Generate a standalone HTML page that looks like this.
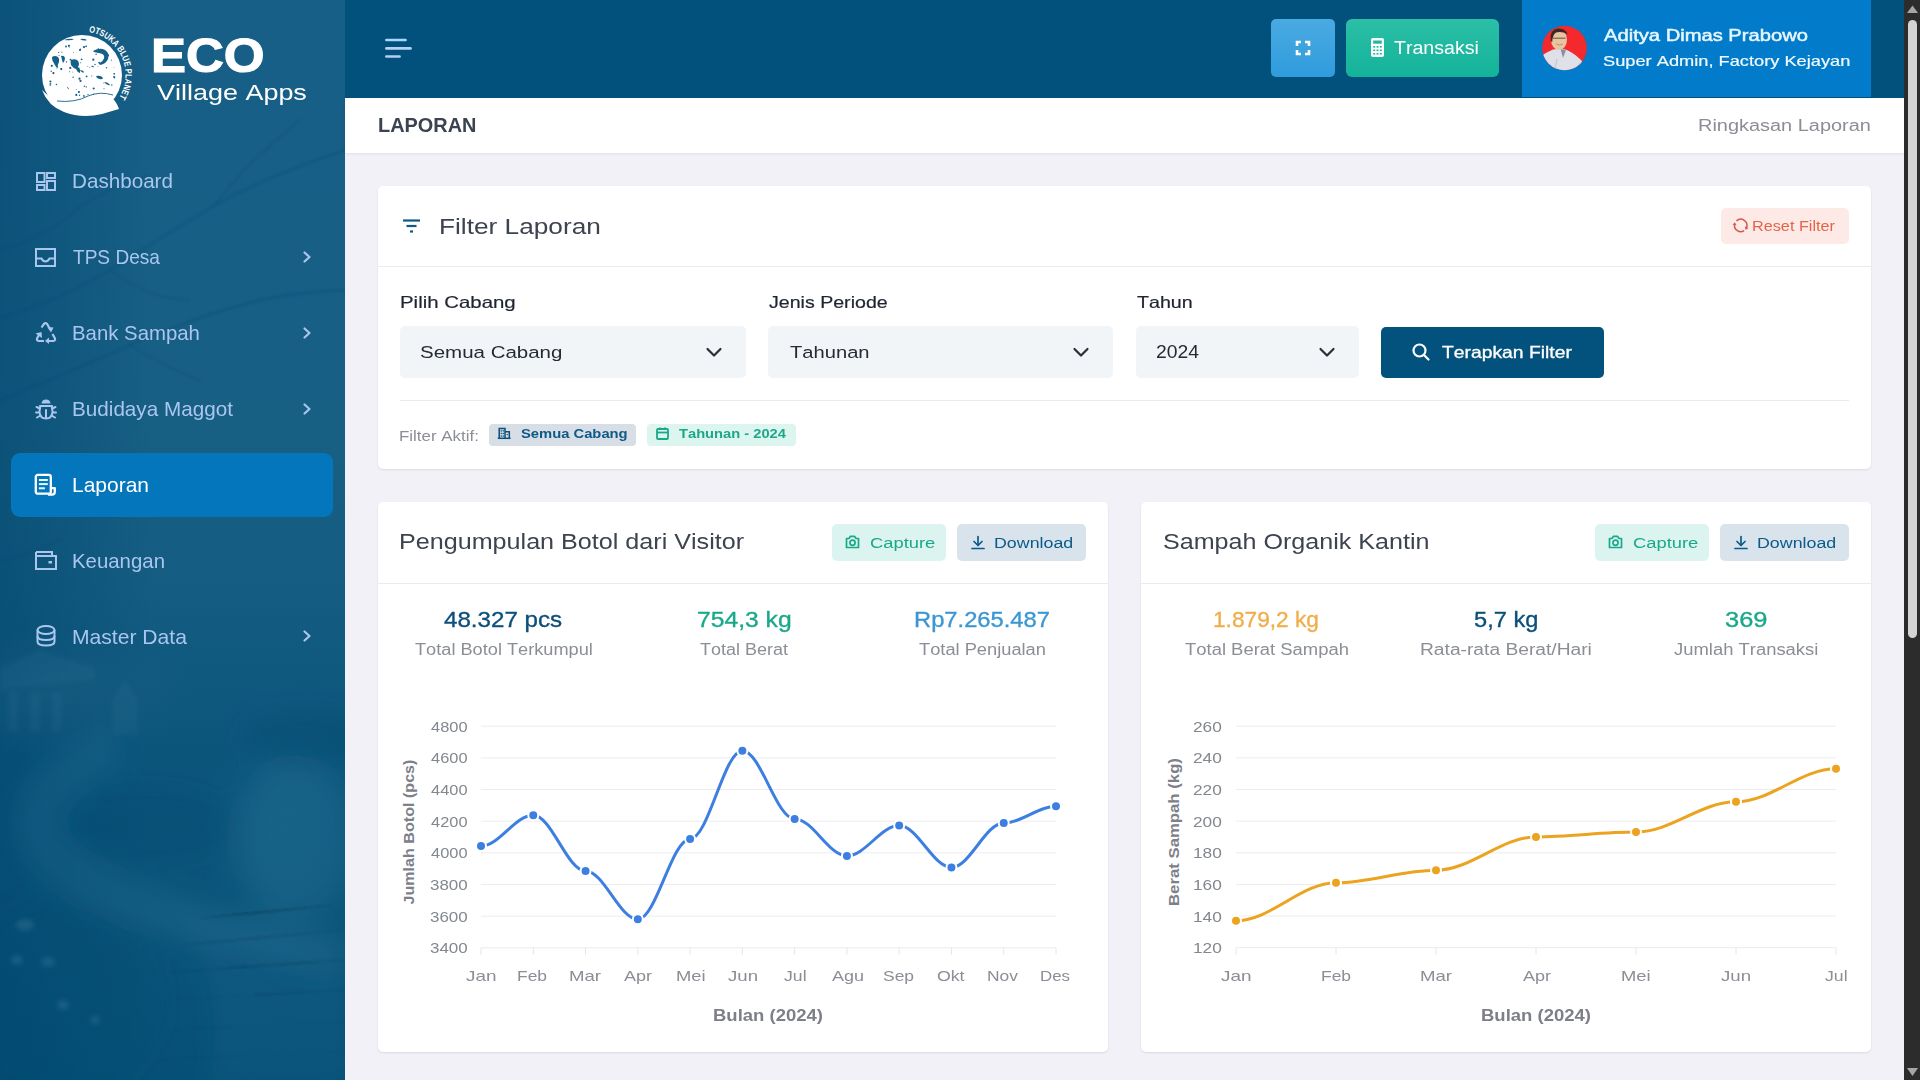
<!DOCTYPE html><html><head><meta charset="utf-8"><style>
*{margin:0;padding:0;box-sizing:border-box}
html,body{width:1920px;height:1080px;overflow:hidden;font-family:"Liberation Sans",sans-serif;background:#f2f1f7}
.abs{position:absolute}
.t{position:absolute;white-space:nowrap;line-height:1;transform-origin:0 0;font-kerning:none}
svg{overflow:visible}
</style></head><body>
<div class="abs" style="left:0px;top:0px;width:345px;height:1080px;background:linear-gradient(180deg,#175f87 0%,#185f84 40%,#145c81 55%,#0b557b 70%,#0a5479 85%,#065077 100%);"></div>
<div class="abs" style="left:0px;top:0px;width:345px;height:1080px;background:linear-gradient(90deg,rgba(0,70,110,.5) 0%,rgba(0,70,110,0) 45%);"></div>
<div class="abs" style="left:0px;top:630px;width:200px;height:130px;background:radial-gradient(ellipse at 25% 50%,rgba(60,120,150,.18),rgba(60,120,150,0) 70%);"></div>
<div class="abs" style="left:200px;top:680px;width:145px;height:300px;background:radial-gradient(ellipse at 60% 50%,rgba(50,125,165,.15),rgba(50,125,165,0) 70%);"></div>
<svg class="abs" style="left:0;top:0;overflow:hidden" width="345" height="1080" viewBox="0 0 345 1080">
<defs><filter id="b1" x="-20%" y="-20%" width="140%" height="140%"><feGaussianBlur stdDeviation="1"/></filter>
<filter id="b6" x="-50%" y="-50%" width="200%" height="200%"><feGaussianBlur stdDeviation="8"/></filter>
<filter id="b2" x="-50%" y="-50%" width="200%" height="200%"><feGaussianBlur stdDeviation="2"/></filter></defs>
<g fill="none" stroke="#0a4a72" stroke-opacity=".28" stroke-linecap="round" filter="url(#b1)">
<path d="M0 318 Q60 300 110 270 Q170 232 215 205 Q270 175 345 150" stroke-width="3"/>
<path d="M0 400 Q70 372 130 345 Q200 315 260 300 Q300 292 345 290" stroke-width="3.5"/>
<path d="M110 270 Q150 300 190 300" stroke-width="2"/>
<path d="M215 205 Q240 170 300 120" stroke-width="2"/>
<path d="M0 250 Q40 240 70 215 Q100 190 150 175" stroke-width="2"/>
<path d="M130 345 Q170 370 200 380" stroke-width="2"/>
<path d="M0 560 Q30 555 60 540" stroke-width="2.5"/>
</g>

<g fill="#5b8fb0" fill-opacity=".09" filter="url(#b2)">
<path d="M0 668 L40 650 L95 668 L95 680 L0 690z"/>
<rect x="8" y="692" width="10" height="40"/><rect x="30" y="692" width="10" height="40"/><rect x="52" y="692" width="10" height="40"/>
<path d="M112 700 L125 680 L138 700 L138 735 L112 735z"/>
</g>
<defs><filter id="b12" x="-50%" y="-50%" width="200%" height="200%"><feGaussianBlur stdDeviation="12"/></filter></defs>
<g filter="url(#b12)">
<ellipse cx="295" cy="840" rx="60" ry="80" fill="#4a90b4" fill-opacity=".14"/>
<ellipse cx="305" cy="738" rx="65" ry="28" fill="#03456b" fill-opacity=".32"/>
<path d="M115 745 Q0 800 55 860 Q120 915 345 955" fill="none" stroke="#4a90b4" stroke-opacity=".13" stroke-width="42"/>
<ellipse cx="150" cy="825" rx="85" ry="38" fill="#03456b" fill-opacity=".22"/>
<ellipse cx="60" cy="1000" rx="105" ry="100" fill="#03456b" fill-opacity=".18"/>
<path d="M165 905 Q260 930 345 945 L345 1080 L210 1080 Q230 980 165 905z" fill="#2f7aa3" fill-opacity=".12"/>
</g>
<g stroke="#0a4a72" stroke-opacity=".20" stroke-width="1.4" filter="url(#b1)">
<path d="M200 918 Q270 912 335 905"/><path d="M180 945 Q260 938 345 930"/><path d="M170 972 Q250 966 345 960"/><path d="M165 1000 Q250 995 345 990"/><path d="M160 1030 Q250 1026 345 1022"/><path d="M155 1060 Q250 1056 345 1052"/>
</g>
<g fill="#7fb0cc" fill-opacity=".16" filter="url(#b2)"><ellipse cx="25" cy="925" rx="9" ry="6"/><ellipse cx="17" cy="960" rx="6" ry="5"/><ellipse cx="48" cy="962" rx="7" ry="5"/><ellipse cx="63" cy="1005" rx="6" ry="5"/><ellipse cx="95" cy="1020" rx="5" ry="4"/></g>
</svg>
<svg class="abs" style="left:30px;top:20px" width="110" height="110" viewBox="0 0 110 110">
<defs><path id="arc" d="M58.8 12.04 A43.5 43.5 0 0 1 88.9 78.05"/></defs>
<circle cx="52" cy="55" r="40" fill="#fff"/>
<path d="M12 70 Q18 86 34 92 Q52 99 72 94 Q82 91 89 89 Q86 80 78 74 Q66 70 54 75 Q40 80 28 80 Q20 78 12 70 Z" fill="#fff"/>
<path d="M27 81 Q45 83 58 76 Q70 71 83 75" fill="none" stroke="#15608a" stroke-width="0.9"/>
<g fill="#15608a"><path d="M22 37 q3 -2 6 0 q2 2 1 5 q-2 3 -1 6 q-3 -1 -3 -4 q-3 -2 -3 -7z"/>
<path d="M31 36 q3 -1 4 2 q0 3 -2 5 q-1 -3 -2 -7z"/>
<path d="M41 40 q4 -2 7 1 q2 3 0 6 q3 2 2 6 q-3 -1 -4 -4 q-3 -1 -5 -4 q-1 -3 0 -5z"/>
<path d="M50 50 q3 0 4 2 q-1 2 -4 -2z"/>
<path d="M63 31 q7 -4 12 -1 q5 3 3 9 q-2 5 -8 6 l-1 -1.5 q4 -2 5 -5 q1 -4 -3 -5 q-4 -1 -7 -1.5z" />
<path d="M61 46 q2 -1 3 1 q-1 1 -3 -1z"/>
<path d="M66 56 q5 -1 7 2 q-1 2 -3 1 q-3 0 -4 -3z"/>
<path d="M34 20 q5 -2 10 -1 q-2 2 -10 1z"/>
<path d="M50 19 q4 -1 7 1 q-3 1.5 -7 -1z"/>
<path d="M74 62 q4 0 6 3 q-3 1 -6 -3z"/><circle cx="39.3" cy="27.4" r="0.45"/><circle cx="21.2" cy="51.2" r="0.7"/><circle cx="58.0" cy="74.4" r="0.55"/><circle cx="46.6" cy="69.3" r="0.45"/><circle cx="84.2" cy="57.1" r="1.1"/><circle cx="84.2" cy="53.8" r="0.9"/><circle cx="56.1" cy="26.3" r="0.9"/><circle cx="38.2" cy="68.6" r="0.55"/><circle cx="23.4" cy="53.4" r="0.55"/><circle cx="42.8" cy="52.0" r="0.45"/><circle cx="56.6" cy="56.4" r="0.9"/><circle cx="65.0" cy="44.5" r="0.7"/><circle cx="49.5" cy="75.3" r="0.7"/><circle cx="37.6" cy="67.3" r="0.55"/><circle cx="51.6" cy="39.3" r="0.9"/><circle cx="24.5" cy="43.9" r="0.7"/><circle cx="26.9" cy="48.3" r="0.45"/><circle cx="56.2" cy="66.9" r="0.7"/><circle cx="40.5" cy="39.7" r="0.9"/><circle cx="57.8" cy="46.3" r="0.45"/><circle cx="84.0" cy="47.4" r="0.45"/><circle cx="20.4" cy="61.5" r="1.1"/><circle cx="36.5" cy="41.9" r="0.7"/><circle cx="20.2" cy="65.6" r="0.55"/><circle cx="69.2" cy="42.7" r="0.9"/><circle cx="21.8" cy="45.8" r="1.1"/><circle cx="36.0" cy="26.5" r="0.9"/><circle cx="78.2" cy="35.3" r="0.9"/><circle cx="43.4" cy="32.3" r="0.45"/><circle cx="28.7" cy="32.4" r="0.55"/><circle cx="29.1" cy="35.5" r="0.55"/><circle cx="46.2" cy="40.9" r="1.1"/><circle cx="38.9" cy="25.8" r="1.1"/><circle cx="84.4" cy="58.6" r="0.45"/><circle cx="48.9" cy="72.0" r="1.1"/><circle cx="44.3" cy="42.7" r="0.45"/><circle cx="50.7" cy="42.8" r="0.55"/><circle cx="27.7" cy="39.1" r="0.45"/><circle cx="23.4" cy="53.1" r="1.1"/><circle cx="23.3" cy="40.5" r="0.45"/><circle cx="43.1" cy="57.3" r="0.7"/><circle cx="59.4" cy="47.4" r="0.45"/><circle cx="49.6" cy="48.0" r="0.45"/><circle cx="26.4" cy="64.5" r="0.7"/><circle cx="50.5" cy="60.9" r="1.1"/><circle cx="54.0" cy="27.1" r="1.1"/><circle cx="81.8" cy="65.0" r="0.7"/><circle cx="66.1" cy="34.2" r="0.7"/><circle cx="81.4" cy="40.1" r="0.55"/><circle cx="54.3" cy="66.3" r="0.7"/><circle cx="61.8" cy="56.0" r="0.55"/><circle cx="74.0" cy="68.7" r="0.55"/><circle cx="30.4" cy="48.6" r="0.45"/><circle cx="50.0" cy="30.0" r="1.1"/><circle cx="31.9" cy="32.1" r="0.55"/><circle cx="40.3" cy="47.9" r="1.1"/><circle cx="76.5" cy="47.7" r="0.7"/><circle cx="63.6" cy="74.4" r="0.55"/><circle cx="50.4" cy="29.1" r="0.7"/><circle cx="68.0" cy="46.7" r="0.45"/><circle cx="68.2" cy="28.5" r="0.55"/><circle cx="49.5" cy="58.7" r="1.1"/><circle cx="63.3" cy="39.7" r="1.1"/><circle cx="73.6" cy="63.0" r="0.45"/><circle cx="53.9" cy="75.9" r="0.9"/><circle cx="31.3" cy="49.1" r="1.1"/><circle cx="39.5" cy="51.7" r="0.55"/><circle cx="20.4" cy="63.9" r="0.9"/><circle cx="63.7" cy="68.5" r="1.1"/><circle cx="46.3" cy="74.9" r="1.1"/></g>
<text font-family="Liberation Sans" font-weight="700" font-size="9.2" fill="#fff"><textPath href="#arc" textLength="85" lengthAdjust="spacingAndGlyphs">OTSUKA BLUE PLANET</textPath></text>
</svg>
<div class="t" style="left:151.41px;top:31.00px;font-size:48.26px;color:#fff;font-weight:700;transform:scaleX(1.0867);-webkit-text-stroke:1.2px #fff;">ECO</div>
<div class="t" style="left:157.00px;top:81.00px;font-size:22.67px;color:#fff;font-weight:400;transform:scaleX(1.1898);">Village Apps</div>
<div class="abs" style="left:11px;top:453px;width:322px;height:64px;background:#0476bb;border-radius:9px;"></div>
<div class="t" style="left:71.98px;top:171.00px;font-size:20.64px;color:#aac6ee;font-weight:400;transform:scaleX(1.0007);">Dashboard</div>
<div class="t" style="left:73.00px;top:247.00px;font-size:20.64px;color:#aac6ee;font-weight:400;transform:scaleX(0.9248);">TPS Desa</div>
<svg class="abs" style="left:300px;top:249px;" width="14" height="16" viewBox="0 0 14 16"><path d="M4.5 3.5 L9.5 8 L4.5 12.5" fill="none" stroke="#aac6ee" stroke-width="2.2" stroke-linecap="round" stroke-linejoin="round"/></svg>
<div class="t" style="left:71.98px;top:323.00px;font-size:20.64px;color:#aac6ee;font-weight:400;transform:scaleX(0.9875);">Bank Sampah</div>
<svg class="abs" style="left:300px;top:325px;" width="14" height="16" viewBox="0 0 14 16"><path d="M4.5 3.5 L9.5 8 L4.5 12.5" fill="none" stroke="#aac6ee" stroke-width="2.2" stroke-linecap="round" stroke-linejoin="round"/></svg>
<div class="t" style="left:71.99px;top:399.00px;font-size:20.64px;color:#aac6ee;font-weight:400;transform:scaleX(1.0023);">Budidaya Maggot</div>
<svg class="abs" style="left:300px;top:401px;" width="14" height="16" viewBox="0 0 14 16"><path d="M4.5 3.5 L9.5 8 L4.5 12.5" fill="none" stroke="#aac6ee" stroke-width="2.2" stroke-linecap="round" stroke-linejoin="round"/></svg>
<div class="t" style="left:71.97px;top:475.00px;font-size:20.64px;color:#fff;font-weight:400;transform:scaleX(1.0173);">Laporan</div>
<div class="t" style="left:71.98px;top:551.00px;font-size:20.64px;color:#aac6ee;font-weight:400;transform:scaleX(0.9886);">Keuangan</div>
<div class="t" style="left:71.99px;top:627.00px;font-size:20.64px;color:#aac6ee;font-weight:400;transform:scaleX(1.0230);">Master Data</div>
<svg class="abs" style="left:300px;top:628px;" width="14" height="16" viewBox="0 0 14 16"><path d="M4.5 3.5 L9.5 8 L4.5 12.5" fill="none" stroke="#aac6ee" stroke-width="2.2" stroke-linecap="round" stroke-linejoin="round"/></svg>
<svg class="abs" style="left:34px;top:170px;" width="24" height="24" viewBox="0 0 24 24"><g fill="none" stroke="#aac6ee" stroke-width="2"><rect x="3" y="3" width="7.5" height="9"/><rect x="13" y="3" width="8" height="5"/><rect x="3" y="15" width="7.5" height="5"/><rect x="13" y="11" width="8" height="9"/></g></svg>
<svg class="abs" style="left:34px;top:246px;" width="24" height="24" viewBox="0 0 24 24"><g fill="none" stroke="#aac6ee" stroke-width="2"><rect x="2" y="3" width="19" height="17"/><path d="M2 12.5 H7.5 Q9 15.5 11.5 15.5 Q14 15.5 15.5 12.5 H21"/></g></svg>
<svg class="abs" style="left:34px;top:321px;" width="24" height="24" viewBox="0 0 24 24"><g fill="none" stroke="#aac6ee" stroke-width="2.2" stroke-linejoin="round"><path d="M7.5 6.5 L10 2.8 Q11.5 1.5 13 2.8 L16.5 9"/><path d="M18.5 13 L21 17.5 Q21.5 20 19 20 H13"/><path d="M10 20 H5 Q2.5 20 3 17.5 L5.5 13"/></g><g fill="#aac6ee"><path d="M13.5 6 L19.5 6.5 L17 11.5z"/><path d="M15 16.5 L11 20 L15 23z"/><path d="M1.5 12.5 L7.5 11 L8 17z"/></g></svg>
<svg class="abs" style="left:34px;top:397px;" width="24" height="24" viewBox="0 0 24 24"><g fill="none" stroke="#aac6ee" stroke-width="2" stroke-linecap="round"><path d="M6 9 H18"/><path d="M6.5 9 Q5.5 12 5.5 15 Q6 21.5 12 21.5 Q18 21.5 18.5 15 Q18.5 12 17.5 9"/><path d="M12 13 V21"/><path d="M2 15.5 H5"/><path d="M19 15.5 H22"/><path d="M2.5 10 L6 11.5"/><path d="M21.5 10 L18 11.5"/><path d="M3 20.5 L6.5 18.5"/><path d="M21 20.5 L17.5 18.5"/></g><path d="M7.5 6.5 Q8 2.5 12 2.5 Q16 2.5 16.5 6.5z" fill="#aac6ee"/></svg>
<svg class="abs" style="left:34px;top:473px;" width="24" height="24" viewBox="0 0 24 24"><g fill="none" stroke="#fff" stroke-width="2.3" stroke-linejoin="round"><rect x="1.8" y="1.9" width="15" height="18.8" rx="2"/><path d="M16.8 15.2 H20.8 V18.8 Q20.8 21.6 18 21.6 H14"/></g><g stroke="#e6ffff" stroke-width="2"><path d="M4.9 7 H13.8"/><path d="M4.9 11.1 H13.8"/><path d="M4.9 15.3 H10.9"/></g></svg>
<svg class="abs" style="left:34px;top:548px;" width="24" height="24" viewBox="0 0 24 24"><g fill="none" stroke="#aac6ee" stroke-width="2"><path d="M2 4 H18 V8"/><rect x="2" y="8" width="20" height="13"/><path d="M2 4 V8"/></g><rect x="14.5" y="13" width="3.5" height="2.5" fill="#aac6ee"/></svg>
<svg class="abs" style="left:34px;top:624px;" width="24" height="24" viewBox="0 0 24 24"><g fill="none" stroke="#aac6ee" stroke-width="2"><ellipse cx="12" cy="6" rx="8.5" ry="4"/><path d="M3.5 6 V17.5 Q3.5 21.5 12 21.5 Q20.5 21.5 20.5 17.5 V6"/><path d="M3.5 12 Q3.5 16 12 16 Q20.5 16 20.5 12"/></g></svg>
<div class="abs" style="left:345px;top:0px;width:1559px;height:98px;background:#02517c;"></div>
<svg class="abs" style="left:384px;top:38px;" width="30" height="20" viewBox="0 0 30 20"><g stroke-width="2.7" stroke-linecap="round"><path d="M2.4 2 H21.5" stroke="#a6d9fb"/><path d="M2.4 10.4 H26.5" stroke="#b6d2f0"/><path d="M2.4 18.5 H15.5" stroke="#b6cdf0"/></g></svg>
<div class="abs" style="left:1271px;top:19px;width:64px;height:58px;background:linear-gradient(180deg,#4aaae2,#2f9cdc);border-radius:5px;"></div>
<svg class="abs" style="left:1296px;top:41px;" width="14" height="14" viewBox="0 0 14 14"><g fill="none" stroke="#fff" stroke-width="2.6"><path d="M1 5 V1 H5"/><path d="M9 1 H13 V5"/><path d="M13 9 V13 H9"/><path d="M5 13 H1 V9"/></g></svg>
<div class="abs" style="left:1346px;top:19px;width:153px;height:58px;background:linear-gradient(180deg,#2bbfa6,#13b39a);border-radius:6px;"></div>
<svg class="abs" style="left:1371px;top:38px;" width="14" height="20" viewBox="0 0 14 20"><rect x="0" y="0" width="13" height="19" rx="2" fill="#fff"/><rect x="2.2" y="2.5" width="8.6" height="3.2" fill="#1eb9a0"/><g fill="#1eb9a0"><rect x="2.2" y="8" width="2" height="1.6"/><rect x="5.5" y="8" width="2" height="1.6"/><rect x="8.8" y="8" width="2" height="1.6"/><rect x="2.2" y="11.5" width="2" height="1.6"/><rect x="5.5" y="11.5" width="2" height="1.6"/><rect x="8.8" y="11.5" width="2" height="1.6"/><rect x="2.2" y="15" width="2" height="1.6"/><rect x="5.5" y="15" width="2" height="1.6"/><rect x="8.8" y="15" width="2" height="1.6"/></g></svg>
<div class="t" style="left:1394.30px;top:39.00px;font-size:18.46px;color:#fff;font-weight:400;transform:scaleX(1.0617);">Transaksi</div>
<div class="abs" style="left:1522px;top:0px;width:349px;height:97px;background:#017bca;"></div>
<svg class="abs" style="left:1541px;top:25px" width="46" height="46" viewBox="0 0 46 46">
<defs><clipPath id="av"><circle cx="23.5" cy="23" r="22.3"/></clipPath></defs>
<g clip-path="url(#av)"><rect width="46" height="46" fill="#f3292d"/>
<path d="M0 31 Q6 27 12 24.5 L21 23.5 Q31 26 39 34 Q43 38 46 46 L0 46z" fill="#dfe0e8"/>
<path d="M19.5 24 L22 33 L25 25z" fill="#8a90a0"/>
<path d="M14 44 L16 34" stroke="#b9bcc8" stroke-width="0.8"/>
<ellipse cx="18" cy="14.5" rx="8" ry="10.5" fill="#e9c4a0"/>
<path d="M9.8 16 Q8.5 4 17.5 3.5 Q25 3.5 26.5 9.5 Q21 6 15 7.5 Q11.5 10 11.2 17z" fill="#3a2a25"/>
<path d="M11.5 13.2 H24.5" stroke="#5a4535" stroke-width="0.9"/>
<path d="M15 19 Q18.5 21 22 19" stroke="#b57f66" stroke-width="0.8" fill="none"/>
<path d="M38 40 L44 36" stroke="#d9c09a" stroke-width="2"/>
</g></svg>
<div class="t" style="left:1604.00px;top:27.00px;font-size:17.01px;color:#e8f6ff;font-weight:400;transform:scaleX(1.1860);-webkit-text-stroke:0.5px #e8f6ff;">Aditya Dimas Prabowo</div>
<div class="t" style="left:1603.00px;top:53.00px;font-size:15.55px;color:#f2fbff;font-weight:400;transform:scaleX(1.1730);-webkit-text-stroke:0.2px #f2fbff;">Super Admin, Factory Kejayan</div>
<div class="abs" style="left:345px;top:98px;width:1559px;height:55px;background:#fff;box-shadow:0 1px 3px rgba(0,0,0,.07);"></div>
<div class="t" style="left:378.27px;top:115.00px;font-size:20.20px;color:#3b4350;font-weight:700;transform:scaleX(0.9868);">LAPORAN</div>
<div class="t" style="left:1697.99px;top:118.00px;font-size:15.84px;color:#8b8e95;font-weight:400;transform:scaleX(1.2592);">Ringkasan Laporan</div>
<div class="abs" style="left:378px;top:186px;width:1493px;height:283px;background:#fff;border-radius:5px;box-shadow:0 1px 2px rgba(40,50,70,.12);"></div>
<div class="abs" style="left:378px;top:266px;width:1493px;height:1px;background:#e9ebef;"></div>
<svg class="abs" style="left:401px;top:218px;" width="22" height="16" viewBox="0 0 22 16"><g stroke="#0b5a87" stroke-width="2.2" stroke-linecap="butt"><path d="M2 2.5 H19"/><path d="M5.5 8 H15.5"/><path d="M9 13.5 H12"/></g></svg>
<div class="t" style="left:439.34px;top:216.00px;font-size:21.80px;color:#3d4450;font-weight:400;transform:scaleX(1.2034);">Filter Laporan</div>
<div class="abs" style="left:1721px;top:208px;width:128px;height:36px;background:#fde9e5;border-radius:5px;"></div>
<svg class="abs" style="left:1732px;top:216px;" width="18" height="18" viewBox="0 0 18 18"><g fill="none" stroke="#d4574a" stroke-width="1.5"><path d="M4.47 4.87 A6.2 6.2 0 0 1 14.45 11.72"/><path d="M12.08 14.60 A6.2 6.2 0 0 1 2.56 8.54"/></g><g fill="#d4574a"><path d="M13.57 13.89 L16.45 11.97 L12.84 10.51z"/><path d="M2.89 6.22 L0.56 8.78 L4.42 9.32z"/></g></svg>
<div class="t" style="left:1752.28px;top:219.00px;font-size:14.68px;color:#e4644a;font-weight:400;transform:scaleX(1.1062);">Reset Filter</div>
<div class="t" style="left:400.23px;top:295.00px;font-size:16.72px;color:#1f2430;font-weight:400;transform:scaleX(1.2217);-webkit-text-stroke:0.2px #1f2430;">Pilih Cabang</div>
<div class="t" style="left:768.75px;top:295.00px;font-size:16.72px;color:#1f2430;font-weight:400;transform:scaleX(1.1726);-webkit-text-stroke:0.2px #1f2430;">Jenis Periode</div>
<div class="t" style="left:1136.70px;top:295.00px;font-size:16.72px;color:#1f2430;font-weight:400;transform:scaleX(1.1761);-webkit-text-stroke:0.2px #1f2430;">Tahun</div>
<div class="abs" style="left:400px;top:326px;width:346px;height:52px;background:#f1f5f8;border-radius:5px;"></div>
<div class="t" style="left:420.48px;top:345.00px;font-size:16.86px;color:#262b33;font-weight:400;transform:scaleX(1.2156);">Semua Cabang</div>
<svg class="abs" style="left:706px;top:347px;" width="16" height="12" viewBox="0 0 16 12"><path d="M1.5 2 L8 8.5 L14.5 2" fill="none" stroke="#2b3038" stroke-width="2.2" stroke-linecap="round" stroke-linejoin="round"/></svg>
<div class="abs" style="left:768px;top:326px;width:345px;height:52px;background:#f1f5f8;border-radius:5px;"></div>
<div class="t" style="left:789.51px;top:345.00px;font-size:16.86px;color:#262b33;font-weight:400;transform:scaleX(1.1954);">Tahunan</div>
<svg class="abs" style="left:1073px;top:347px;" width="16" height="12" viewBox="0 0 16 12"><path d="M1.5 2 L8 8.5 L14.5 2" fill="none" stroke="#2b3038" stroke-width="2.2" stroke-linecap="round" stroke-linejoin="round"/></svg>
<div class="abs" style="left:1136px;top:326px;width:223px;height:52px;background:#f1f5f8;border-radius:5px;"></div>
<div class="t" style="left:1156.46px;top:344.00px;font-size:17.59px;color:#262b33;font-weight:400;transform:scaleX(1.0995);">2024</div>
<svg class="abs" style="left:1319px;top:347px;" width="16" height="12" viewBox="0 0 16 12"><path d="M1.5 2 L8 8.5 L14.5 2" fill="none" stroke="#2b3038" stroke-width="2.2" stroke-linecap="round" stroke-linejoin="round"/></svg>
<div class="abs" style="left:1381px;top:327px;width:223px;height:51px;background:#03527e;border-radius:5px;"></div>
<svg class="abs" style="left:1412px;top:343px;" width="18" height="18" viewBox="0 0 18 18"><g fill="none" stroke="#fff" stroke-width="2.2" stroke-linecap="round"><circle cx="7.5" cy="7.5" r="6"/><path d="M12 12 L16.5 16.5"/></g></svg>
<div class="t" style="left:1441.59px;top:345.00px;font-size:16.72px;color:#fff;font-weight:400;transform:scaleX(1.1565);-webkit-text-stroke:0.3px #fff;">Terapkan Filter</div>
<div class="abs" style="left:400px;top:400px;width:1449px;height:1px;background:#e9ebef;"></div>
<div class="t" style="left:398.99px;top:428.00px;font-size:15.55px;color:#8b8e95;font-weight:400;transform:scaleX(1.0884);">Filter Aktif:</div>
<div class="abs" style="left:489px;top:424px;width:147px;height:22px;background:#d7dee6;border-radius:4px;"></div>
<svg class="abs" style="left:497px;top:426px;" width="16" height="16" viewBox="0 0 16 16"><g fill="none" stroke="#0b4f7a" stroke-width="1.5"><path d="M2.2 12 V2.6 H8 V12"/><path d="M8 5.8 H12.3 V12"/><path d="M0.8 12.3 H13.6"/></g><g fill="#0b4f7a"><rect x="3.6" y="4.2" width="1.3" height="1.3"/><rect x="5.6" y="4.2" width="1.3" height="1.3"/><rect x="3.6" y="6.8" width="1.3" height="1.3"/><rect x="5.6" y="6.8" width="1.3" height="1.3"/><rect x="3.6" y="9.4" width="1.3" height="1.3"/><rect x="5.6" y="9.4" width="1.3" height="1.3"/><rect x="9.6" y="8" width="1.2" height="1.2"/></g></svg>
<div class="t" style="left:521.20px;top:428.00px;font-size:12.79px;color:#0d5a86;font-weight:700;transform:scaleX(1.1548);">Semua Cabang</div>
<div class="abs" style="left:647px;top:424px;width:149px;height:22px;background:#dcf5ee;border-radius:4px;"></div>
<svg class="abs" style="left:655px;top:425.5px;" width="16" height="16" viewBox="0 0 16 16"><g fill="none" stroke="#1aa88b" stroke-width="1.8"><rect x="2" y="3" width="11" height="10" rx="1"/><path d="M2 6.5 H13"/><path d="M5 1.5 V4"/><path d="M10 1.5 V4"/></g></svg>
<div class="t" style="left:679.40px;top:428.00px;font-size:12.79px;color:#1ea68a;font-weight:700;transform:scaleX(1.1491);">Tahunan - 2024</div>
<div class="abs" style="left:378px;top:502px;width:730px;height:550px;background:#fff;border-radius:5px;box-shadow:0 1px 2px rgba(40,50,70,.12);"></div>
<div class="abs" style="left:378px;top:583px;width:730px;height:1px;background:#e9ebef;"></div>
<div class="t" style="left:398.79px;top:531.00px;font-size:21.80px;color:#3d4450;font-weight:400;transform:scaleX(1.1530);">Pengumpulan Botol dari Visitor</div>
<div class="abs" style="left:832px;top:524px;width:114px;height:37px;background:#dcf4ef;border-radius:5px;"></div>
<svg class="abs" style="left:845px;top:535px;" width="15" height="14" viewBox="0 0 15 14"><g fill="none" stroke="#1aa88b" stroke-width="1.7" stroke-linejoin="round"><path d="M1.5 3.5 H4 L5.5 1.3 H9.5 L11 3.5 H13.5 V12.5 H1.5z"/><circle cx="7.5" cy="7.8" r="2.6"/></g></svg>
<div class="t" style="left:869.68px;top:536.00px;font-size:14.68px;color:#1aa88b;font-weight:400;transform:scaleX(1.2512);">Capture</div>
<div class="abs" style="left:957px;top:524px;width:129px;height:37px;background:#d9e3ec;border-radius:5px;"></div>
<svg class="abs" style="left:971px;top:535px;" width="14" height="15" viewBox="0 0 14 15"><g fill="none" stroke="#0b5a8a" stroke-width="1.7" stroke-linecap="round" stroke-linejoin="round"><path d="M7 1.5 V10"/><path d="M3 6.5 L7 10.5 L11 6.5"/><path d="M1 13.5 H13"/></g></svg>
<div class="t" style="left:994.27px;top:536.00px;font-size:14.68px;color:#0b5a8a;font-weight:400;transform:scaleX(1.2138);">Download</div>
<div class="t" style="left:444.30px;top:608.00px;font-size:22.67px;color:#0b4f7a;font-weight:400;transform:scaleX(1.0654);-webkit-text-stroke:0.35px #0b4f7a;">48.327 pcs</div>
<div class="t" style="left:415.10px;top:642.00px;font-size:15.84px;color:#8b8e95;font-weight:400;transform:scaleX(1.1489);">Total Botol Terkumpul</div>
<div class="t" style="left:696.69px;top:608.00px;font-size:22.67px;color:#1aa88b;font-weight:400;transform:scaleX(1.0884);-webkit-text-stroke:0.35px #1aa88b;">754,3 kg</div>
<div class="t" style="left:699.51px;top:642.00px;font-size:15.84px;color:#8b8e95;font-weight:400;transform:scaleX(1.1362);">Total Berat</div>
<div class="t" style="left:914.38px;top:608.00px;font-size:22.67px;color:#3a96d4;font-weight:400;transform:scaleX(1.0475);-webkit-text-stroke:0.35px #3a96d4;">Rp7.265.487</div>
<div class="t" style="left:919.40px;top:642.00px;font-size:15.84px;color:#8b8e95;font-weight:400;transform:scaleX(1.1539);">Total Penjualan</div>
<div class="t" style="left:430.70px;top:719.00px;font-size:15.11px;color:#83878e;font-weight:400;transform:scaleX(1.0863);">4800</div>
<div class="t" style="left:430.70px;top:750.00px;font-size:15.11px;color:#83878e;font-weight:400;transform:scaleX(1.0863);">4600</div>
<div class="t" style="left:430.70px;top:782.00px;font-size:15.11px;color:#83878e;font-weight:400;transform:scaleX(1.0863);">4400</div>
<div class="t" style="left:430.70px;top:814.00px;font-size:15.11px;color:#83878e;font-weight:400;transform:scaleX(1.0863);">4200</div>
<div class="t" style="left:430.70px;top:845.00px;font-size:15.11px;color:#83878e;font-weight:400;transform:scaleX(1.0863);">4000</div>
<div class="t" style="left:429.59px;top:877.00px;font-size:15.11px;color:#83878e;font-weight:400;transform:scaleX(1.1224);">3800</div>
<div class="t" style="left:429.59px;top:909.00px;font-size:15.11px;color:#83878e;font-weight:400;transform:scaleX(1.1224);">3600</div>
<div class="t" style="left:429.59px;top:940.00px;font-size:15.11px;color:#83878e;font-weight:400;transform:scaleX(1.1224);">3400</div>
<div class="t" style="left:466.25px;top:968.00px;font-size:15.12px;color:#8b8e95;font-weight:400;transform:scaleX(1.2531);">Jan</div>
<div class="t" style="left:517.45px;top:968.00px;font-size:15.12px;color:#8b8e95;font-weight:400;transform:scaleX(1.1552);">Feb</div>
<div class="t" style="left:569.47px;top:968.00px;font-size:15.12px;color:#8b8e95;font-weight:400;transform:scaleX(1.2311);">Mar</div>
<div class="t" style="left:623.50px;top:968.00px;font-size:15.12px;color:#8b8e95;font-weight:400;transform:scaleX(1.1911);">Apr</div>
<div class="t" style="left:675.69px;top:968.00px;font-size:15.12px;color:#8b8e95;font-weight:400;transform:scaleX(1.2169);">Mei</div>
<div class="t" style="left:727.50px;top:968.00px;font-size:15.12px;color:#8b8e95;font-weight:400;transform:scaleX(1.2326);">Jun</div>
<div class="t" style="left:783.72px;top:968.00px;font-size:15.12px;color:#8b8e95;font-weight:400;transform:scaleX(1.1673);">Jul</div>
<div class="t" style="left:831.52px;top:968.00px;font-size:15.12px;color:#8b8e95;font-weight:400;transform:scaleX(1.1917);">Agu</div>
<div class="t" style="left:882.97px;top:968.00px;font-size:15.12px;color:#8b8e95;font-weight:400;transform:scaleX(1.1540);">Sep</div>
<div class="t" style="left:936.74px;top:968.00px;font-size:15.12px;color:#8b8e95;font-weight:400;transform:scaleX(1.1707);">Okt</div>
<div class="t" style="left:987.46px;top:968.00px;font-size:15.12px;color:#8b8e95;font-weight:400;transform:scaleX(1.1547);">Nov</div>
<div class="t" style="left:1040.45px;top:968.00px;font-size:15.12px;color:#8b8e95;font-weight:400;transform:scaleX(1.1175);">Des</div>
<svg class="abs" style="left:0;top:0" width="1920" height="1080"><path d="M481 726.20 H1056" stroke="#ececef" stroke-width="1"/><path d="M481 757.86 H1056" stroke="#ececef" stroke-width="1"/><path d="M481 789.51 H1056" stroke="#ececef" stroke-width="1"/><path d="M481 821.17 H1056" stroke="#ececef" stroke-width="1"/><path d="M481 852.83 H1056" stroke="#ececef" stroke-width="1"/><path d="M481 884.49 H1056" stroke="#ececef" stroke-width="1"/><path d="M481 916.14 H1056" stroke="#ececef" stroke-width="1"/><path d="M481 947.80 H1056" stroke="#ececef" stroke-width="1"/><path d="M481.00 947.8 V954.8" stroke="#e6e6ea" stroke-width="1"/><path d="M533.27 947.8 V954.8" stroke="#e6e6ea" stroke-width="1"/><path d="M585.55 947.8 V954.8" stroke="#e6e6ea" stroke-width="1"/><path d="M637.82 947.8 V954.8" stroke="#e6e6ea" stroke-width="1"/><path d="M690.09 947.8 V954.8" stroke="#e6e6ea" stroke-width="1"/><path d="M742.36 947.8 V954.8" stroke="#e6e6ea" stroke-width="1"/><path d="M794.64 947.8 V954.8" stroke="#e6e6ea" stroke-width="1"/><path d="M846.91 947.8 V954.8" stroke="#e6e6ea" stroke-width="1"/><path d="M899.18 947.8 V954.8" stroke="#e6e6ea" stroke-width="1"/><path d="M951.45 947.8 V954.8" stroke="#e6e6ea" stroke-width="1"/><path d="M1003.73 947.8 V954.8" stroke="#e6e6ea" stroke-width="1"/><path d="M1056.00 947.8 V954.8" stroke="#e6e6ea" stroke-width="1"/><path d="M481.00 846.00 C499.30 846.00 514.98 815.20 533.27 815.20 C551.57 815.20 567.25 871.00 585.55 871.00 C603.84 871.00 619.52 919.30 637.82 919.30 C656.11 919.30 671.80 838.90 690.09 838.90 C708.39 838.90 724.07 750.70 742.36 750.70 C760.66 750.70 776.34 818.90 794.64 818.90 C812.93 818.90 828.61 855.90 846.91 855.90 C865.20 855.90 880.89 825.60 899.18 825.60 C917.48 825.60 933.16 867.50 951.45 867.50 C969.75 867.50 985.43 823.00 1003.73 823.00 C1022.02 823.00 1037.70 806.30 1056.00 806.30" fill="none" stroke="#3d7fe0" stroke-width="3"/><circle cx="481.00" cy="846.00" r="5" fill="#3d7fe0" stroke="#fff" stroke-width="2"/><circle cx="533.27" cy="815.20" r="5" fill="#3d7fe0" stroke="#fff" stroke-width="2"/><circle cx="585.55" cy="871.00" r="5" fill="#3d7fe0" stroke="#fff" stroke-width="2"/><circle cx="637.82" cy="919.30" r="5" fill="#3d7fe0" stroke="#fff" stroke-width="2"/><circle cx="690.09" cy="838.90" r="5" fill="#3d7fe0" stroke="#fff" stroke-width="2"/><circle cx="742.36" cy="750.70" r="5" fill="#3d7fe0" stroke="#fff" stroke-width="2"/><circle cx="794.64" cy="818.90" r="5" fill="#3d7fe0" stroke="#fff" stroke-width="2"/><circle cx="846.91" cy="855.90" r="5" fill="#3d7fe0" stroke="#fff" stroke-width="2"/><circle cx="899.18" cy="825.60" r="5" fill="#3d7fe0" stroke="#fff" stroke-width="2"/><circle cx="951.45" cy="867.50" r="5" fill="#3d7fe0" stroke="#fff" stroke-width="2"/><circle cx="1003.73" cy="823.00" r="5" fill="#3d7fe0" stroke="#fff" stroke-width="2"/><circle cx="1056.00" cy="806.30" r="5" fill="#3d7fe0" stroke="#fff" stroke-width="2"/></svg>
<div class="t" style="left:713.47px;top:1008.00px;font-size:15.84px;color:#7d8088;font-weight:700;transform:scaleX(1.1681);">Bulan (2024)</div>
<div class="abs" style="left:409px;top:832px;width:0;height:0"><div class="t" style="left:0;top:0;font-size:14.10px;font-weight:700;color:#7d8088;transform-origin:0 0;transform:rotate(-90deg) translate(-72.50px,-7.05px) scaleX(1.1426);">Jumlah Botol (pcs)</div></div>
<div class="abs" style="left:1141px;top:502px;width:730px;height:550px;background:#fff;border-radius:5px;box-shadow:0 1px 2px rgba(40,50,70,.12);"></div>
<div class="abs" style="left:1141px;top:583px;width:730px;height:1px;background:#e9ebef;"></div>
<div class="t" style="left:1162.80px;top:531.00px;font-size:21.80px;color:#3d4450;font-weight:400;transform:scaleX(1.1518);">Sampah Organik Kantin</div>
<div class="abs" style="left:1595px;top:524px;width:114px;height:37px;background:#dcf4ef;border-radius:5px;"></div>
<svg class="abs" style="left:1608px;top:535px;" width="15" height="14" viewBox="0 0 15 14"><g fill="none" stroke="#1aa88b" stroke-width="1.7" stroke-linejoin="round"><path d="M1.5 3.5 H4 L5.5 1.3 H9.5 L11 3.5 H13.5 V12.5 H1.5z"/><circle cx="7.5" cy="7.8" r="2.6"/></g></svg>
<div class="t" style="left:1632.68px;top:536.00px;font-size:14.68px;color:#1aa88b;font-weight:400;transform:scaleX(1.2512);">Capture</div>
<div class="abs" style="left:1720px;top:524px;width:129px;height:37px;background:#d9e3ec;border-radius:5px;"></div>
<svg class="abs" style="left:1734px;top:535px;" width="14" height="15" viewBox="0 0 14 15"><g fill="none" stroke="#0b5a8a" stroke-width="1.7" stroke-linecap="round" stroke-linejoin="round"><path d="M7 1.5 V10"/><path d="M3 6.5 L7 10.5 L11 6.5"/><path d="M1 13.5 H13"/></g></svg>
<div class="t" style="left:1757.27px;top:536.00px;font-size:14.68px;color:#0b5a8a;font-weight:400;transform:scaleX(1.2138);">Download</div>
<div class="t" style="left:1213.18px;top:608.00px;font-size:22.67px;color:#f0ae4a;font-weight:400;transform:scaleX(1.0014);-webkit-text-stroke:0.35px #f0ae4a;">1.879,2 kg</div>
<div class="t" style="left:1184.70px;top:642.00px;font-size:15.84px;color:#8b8e95;font-weight:400;transform:scaleX(1.1643);">Total Berat Sampah</div>
<div class="t" style="left:1473.81px;top:608.00px;font-size:22.67px;color:#0b4f7a;font-weight:400;transform:scaleX(1.0420);-webkit-text-stroke:0.35px #0b4f7a;">5,7 kg</div>
<div class="t" style="left:1419.99px;top:642.00px;font-size:15.84px;color:#8b8e95;font-weight:400;transform:scaleX(1.2135);">Rata-rata Berat/Hari</div>
<div class="t" style="left:1724.68px;top:608.00px;font-size:22.67px;color:#1aa88b;font-weight:400;transform:scaleX(1.1236);-webkit-text-stroke:0.35px #1aa88b;">369</div>
<div class="t" style="left:1673.65px;top:642.00px;font-size:15.84px;color:#8b8e95;font-weight:400;transform:scaleX(1.1641);">Jumlah Transaksi</div>
<div class="t" style="left:1193.42px;top:719.00px;font-size:15.11px;color:#83878e;font-weight:400;transform:scaleX(1.1424);">260</div>
<div class="t" style="left:1193.42px;top:750.00px;font-size:15.11px;color:#83878e;font-weight:400;transform:scaleX(1.1424);">240</div>
<div class="t" style="left:1193.42px;top:782.00px;font-size:15.11px;color:#83878e;font-weight:400;transform:scaleX(1.1424);">220</div>
<div class="t" style="left:1193.42px;top:814.00px;font-size:15.11px;color:#83878e;font-weight:400;transform:scaleX(1.1424);">200</div>
<div class="t" style="left:1193.42px;top:845.00px;font-size:15.11px;color:#83878e;font-weight:400;transform:scaleX(1.1424);">180</div>
<div class="t" style="left:1193.42px;top:877.00px;font-size:15.11px;color:#83878e;font-weight:400;transform:scaleX(1.1424);">160</div>
<div class="t" style="left:1193.42px;top:909.00px;font-size:15.11px;color:#83878e;font-weight:400;transform:scaleX(1.1424);">140</div>
<div class="t" style="left:1193.42px;top:940.00px;font-size:15.11px;color:#83878e;font-weight:400;transform:scaleX(1.1424);">120</div>
<div class="t" style="left:1221.25px;top:968.00px;font-size:15.12px;color:#8b8e95;font-weight:400;transform:scaleX(1.2531);">Jan</div>
<div class="t" style="left:1320.93px;top:968.00px;font-size:15.12px;color:#8b8e95;font-weight:400;transform:scaleX(1.1552);">Feb</div>
<div class="t" style="left:1419.94px;top:968.00px;font-size:15.12px;color:#8b8e95;font-weight:400;transform:scaleX(1.2311);">Mar</div>
<div class="t" style="left:1522.50px;top:968.00px;font-size:15.12px;color:#8b8e95;font-weight:400;transform:scaleX(1.1911);">Apr</div>
<div class="t" style="left:1621.20px;top:968.00px;font-size:15.12px;color:#8b8e95;font-weight:400;transform:scaleX(1.2169);">Mei</div>
<div class="t" style="left:1721.48px;top:968.00px;font-size:15.12px;color:#8b8e95;font-weight:400;transform:scaleX(1.2326);">Jun</div>
<div class="t" style="left:1824.75px;top:968.00px;font-size:15.12px;color:#8b8e95;font-weight:400;transform:scaleX(1.1673);">Jul</div>
<svg class="abs" style="left:0;top:0" width="1920" height="1080"><path d="M1236 726.20 H1836" stroke="#ececef" stroke-width="1"/><path d="M1236 757.84 H1836" stroke="#ececef" stroke-width="1"/><path d="M1236 789.49 H1836" stroke="#ececef" stroke-width="1"/><path d="M1236 821.13 H1836" stroke="#ececef" stroke-width="1"/><path d="M1236 852.77 H1836" stroke="#ececef" stroke-width="1"/><path d="M1236 884.41 H1836" stroke="#ececef" stroke-width="1"/><path d="M1236 916.06 H1836" stroke="#ececef" stroke-width="1"/><path d="M1236 947.70 H1836" stroke="#ececef" stroke-width="1"/><path d="M1236.00 947.7 V954.7" stroke="#e6e6ea" stroke-width="1"/><path d="M1336.00 947.7 V954.7" stroke="#e6e6ea" stroke-width="1"/><path d="M1436.00 947.7 V954.7" stroke="#e6e6ea" stroke-width="1"/><path d="M1536.00 947.7 V954.7" stroke="#e6e6ea" stroke-width="1"/><path d="M1636.00 947.7 V954.7" stroke="#e6e6ea" stroke-width="1"/><path d="M1736.00 947.7 V954.7" stroke="#e6e6ea" stroke-width="1"/><path d="M1836.00 947.7 V954.7" stroke="#e6e6ea" stroke-width="1"/><path d="M1236.00 920.70 C1271.00 920.70 1301.00 882.80 1336.00 882.80 C1371.00 882.80 1401.00 870.20 1436.00 870.20 C1471.00 870.20 1501.00 836.90 1536.00 836.90 C1571.00 836.90 1601.00 832.10 1636.00 832.10 C1671.00 832.10 1701.00 801.80 1736.00 801.80 C1771.00 801.80 1801.00 768.70 1836.00 768.70" fill="none" stroke="#eca31f" stroke-width="3"/><circle cx="1236.00" cy="920.70" r="5" fill="#eca31f" stroke="#fff" stroke-width="2"/><circle cx="1336.00" cy="882.80" r="5" fill="#eca31f" stroke="#fff" stroke-width="2"/><circle cx="1436.00" cy="870.20" r="5" fill="#eca31f" stroke="#fff" stroke-width="2"/><circle cx="1536.00" cy="836.90" r="5" fill="#eca31f" stroke="#fff" stroke-width="2"/><circle cx="1636.00" cy="832.10" r="5" fill="#eca31f" stroke="#fff" stroke-width="2"/><circle cx="1736.00" cy="801.80" r="5" fill="#eca31f" stroke="#fff" stroke-width="2"/><circle cx="1836.00" cy="768.70" r="5" fill="#eca31f" stroke="#fff" stroke-width="2"/></svg>
<div class="t" style="left:1480.98px;top:1008.00px;font-size:15.84px;color:#7d8088;font-weight:700;transform:scaleX(1.1681);">Bulan (2024)</div>
<div class="abs" style="left:1174px;top:832px;width:0;height:0"><div class="t" style="left:0;top:0;font-size:14.10px;font-weight:700;color:#7d8088;transform-origin:0 0;transform:rotate(-90deg) translate(-74.00px,-7.05px) scaleX(1.1880);">Berat Sampah (kg)</div></div>
<div class="abs" style="left:1904px;top:0px;width:16px;height:1080px;background:#2c2c2c;"></div>
<svg class="abs" style="left:1904px;top:0px;" width="16" height="1080" viewBox="0 0 16 1080"><path d="M3 13 L8.5 5.5 L14 13z" fill="#a6a6a6"/><rect x="4" y="20" width="9" height="618" rx="4.5" fill="#d4d4d4"/><path d="M3 1068 L8.5 1076 L14 1068z" fill="#a6a6a6"/></svg>
</body></html>
